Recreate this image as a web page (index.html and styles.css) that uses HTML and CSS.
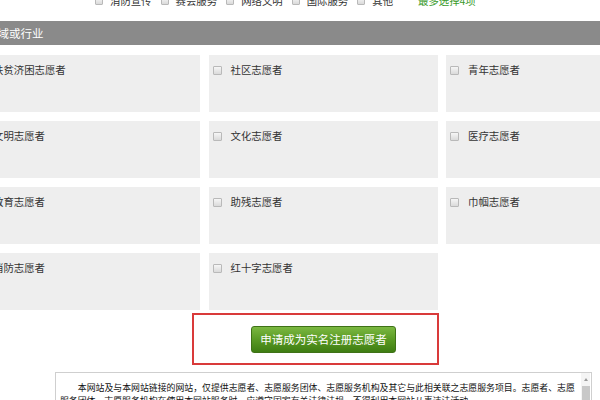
FILE: index.html
```html
<!DOCTYPE html>
<html lang="zh-CN">
<head>
<meta charset="utf-8">
<title>志愿者注册</title>
<link rel="stylesheet" href="styles.css">
</head>
<body>
<div class="page">
  <div class="topopts">
    <span class="opt"><span class="cb small"></span><span class="opt-label">消防宣传</span></span>
    <span class="opt"><span class="cb small"></span><span class="opt-label">赛会服务</span></span>
    <span class="opt"><span class="cb small"></span><span class="opt-label">网络文明</span></span>
    <span class="opt"><span class="cb small"></span><span class="opt-label">国际服务</span></span>
    <span class="opt"><span class="cb small"></span><span class="opt-label">其他</span></span>
    <span class="hint">最多选择4项</span>
  </div>

  <div class="section-title">领域或行业</div>

  <div class="grid">
    <div class="cell"><span class="cb"></span><span class="cell-label">扶贫济困志愿者</span></div>
    <div class="cell"><span class="cb"></span><span class="cell-label">社区志愿者</span></div>
    <div class="cell"><span class="cb"></span><span class="cell-label">青年志愿者</span></div>
    <div class="cell"><span class="cb"></span><span class="cell-label">文明志愿者</span></div>
    <div class="cell"><span class="cb"></span><span class="cell-label">文化志愿者</span></div>
    <div class="cell"><span class="cb"></span><span class="cell-label">医疗志愿者</span></div>
    <div class="cell"><span class="cb"></span><span class="cell-label">教育志愿者</span></div>
    <div class="cell"><span class="cb"></span><span class="cell-label">助残志愿者</span></div>
    <div class="cell"><span class="cb"></span><span class="cell-label">巾帼志愿者</span></div>
    <div class="cell"><span class="cb"></span><span class="cell-label">消防志愿者</span></div>
    <div class="cell"><span class="cb"></span><span class="cell-label">红十字志愿者</span></div>
  </div>

  <div class="actions">
    <div class="highlight">
      <button class="btn" type="button">申请成为实名注册志愿者</button>
    </div>
  </div>

  <div class="agreement">
    <div class="agreement-text">本网站及与本网站链接的网站，仅提供志愿者、志愿服务团体、志愿服务机构及其它与此相关联之志愿服务项目。志愿者、志愿服务团体、志愿服务机构在使用本网站服务时，应遵守国家有关法律法规，不得利用本网站从事违法活动。</div>
    <div class="scrollbar"><span class="arrow"></span><span class="thumb"></span></div>
  </div>
</div>
</body>
</html>
```

FILE: styles.css
```css
html, body {
  margin: 0;
  padding: 0;
  background: #ffffff;
}
body {
  width: 600px;
  height: 400px;
  overflow: hidden;
  font-family: "Noto Sans CJK SC", "Noto Sans", sans-serif;
  color: #333333;
}
.page {
  width: 704px;
  margin-left: -29px;
}

/* top option row */
.topopts {
  display: flex;
  align-items: center;
  height: 14px;
  margin-top: -6px;
  padding-left: 124px;
  font-size: 10.4px;
  line-height: 14px;
}
.opt {
  display: flex;
  align-items: center;
  margin-right: 9px;
}
.opt-label {
  color: #333333;
}
.hint {
  margin-left: 16px;
  color: #3a9a2a;
}

.cb {
  display: inline-block;
  box-sizing: border-box;
  width: 9px;
  height: 9px;
  border: 1px solid #b9b9b9;
  border-radius: 1px;
  background: linear-gradient(#f6f6f6, #dadada);
  margin-right: 9px;
  flex: none;
}
.cb.small {
  width: 8px;
  height: 8px;
  margin-right: 7px;
}

/* section header */
.section-title {
  margin-top: 13px;
  height: 24px;
  line-height: 24px;
  background: #8a8a8a;
  color: #ffffff;
  font-size: 11.5px;
  padding-left: 15px;
}

/* grid of options */
.grid {
  display: grid;
  grid-template-columns: repeat(3, 229px);
  grid-auto-rows: 57px;
  column-gap: 8.5px;
  row-gap: 9px;
  margin-top: 10px;
}
.cell {
  background: #eeeeee;
  display: flex;
  align-items: flex-start;
  padding: 8px 0 0 4px;
}
.cell .cb {
  margin-top: 2.5px;
}
.cell-label {
  font-size: 10.4px;
  line-height: 14px;
  color: #333333;
}

/* action */
.actions {
  margin-top: 3px;
  display: flex;
}
.highlight {
  margin-left: 221px;
  border: 2px solid #d93a3a;
  padding: 11px 41px 10px 57px;
  display: flex;
}
.btn {
  width: 145px;
  height: 27px;
  padding: 0;
  border: 1px solid #3f7217;
  border-radius: 3px;
  background: linear-gradient(#7bb841, #5a9a24 50%, #3e7d12);
  color: #ffffff;
  font-family: "Noto Sans CJK SC", "Noto Sans", sans-serif;
  font-size: 11.5px;
  line-height: 25px;
  text-align: center;
}

/* agreement box */
.agreement {
  margin-top: 7px;
  margin-left: 84px;
  width: 537px;
  height: 120px;
  box-sizing: border-box;
  border: 1px solid #cfcfcf;
  display: flex;
}
.agreement-text {
  flex: 1;
  padding: 8px 6px 0 4px;
  font-size: 8.9px;
  line-height: 13px;
  text-indent: 2em;
  color: #111111;
}
.scrollbar {
  width: 9px;
  margin-right: 1px;
  display: flex;
  flex-direction: column;
  align-items: center;
  background: #f4f4f4;
}
.arrow {
  margin-top: 5px;
  width: 0;
  height: 0;
  border-left: 2.5px solid transparent;
  border-right: 2.5px solid transparent;
  border-bottom: 3px solid #9a9a9a;
}
.thumb {
  margin-top: 5px;
  width: 8px;
  flex: 1;
  background: #c8c8c8;
}
```
